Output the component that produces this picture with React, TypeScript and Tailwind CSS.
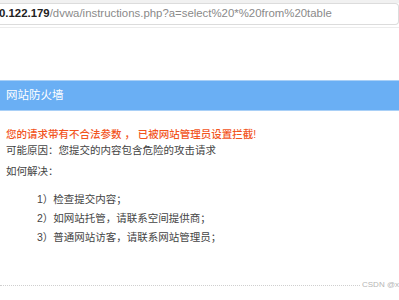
export default function App() {
  const steps = ["1）检查提交内容；", "2）如网站托管，请联系空间提供商；", "3）普通网站访客，请联系网站管理员；"];
  return (
    <div
      className="w-[399px] h-[300px] bg-white overflow-hidden relative"
      style={{ fontFamily: '"Liberation Sans", "Noto Sans CJK SC", sans-serif' }}
    >
      <div className="h-[3px] bg-[#f1f1f1]" />
      <div className="h-[22px] border-y border-[#dcdcdc] rounded-r-[4px] border-r flex items-center text-[11.4px] whitespace-nowrap">
        <span className="text-[#222] font-bold -ml-[1px]">0.122.179</span>
        <span className="text-[#8a8a8a]">/dvwa/instructions.php?a=select%20*%20from%20table</span>
      </div>
      <div className="h-[3px] border-b border-[#ececec]" />

      <div className="mt-[52px] h-[31px] bg-[#6aaff4] border-y border-[#a9d0f7] flex items-center pl-[6px] text-white text-[11.5px]">
        网站防火墙
      </div>

      <div className="pl-[6px] pt-[15px] text-[10.5px] leading-[16px]">
        <div className="text-[#f2551d] font-medium">您的请求带有不合法参数 ， 已被网站管理员设置拦截!</div>
        <div className="text-[#444]">可能原因：您提交的内容包含危险的攻击请求</div>
        <div className="text-[#444] mt-[5px]">如何解决：</div>
        <div className="pl-[31px] mt-[11px] text-[#444] leading-[19px]">
          {steps.map((s) => (
            <div key={s}>{s}</div>
          ))}
        </div>
      </div>

      <div className="absolute left-0 right-0 top-[279px] flex items-center">
        <div className="flex-1 border-t border-dotted border-[#cfcfcf]" />
        <span className="text-[8px] text-[#b5b5b5] pl-[2px] whitespace-nowrap">CSDN @x</span>
      </div>
    </div>
  );
}
